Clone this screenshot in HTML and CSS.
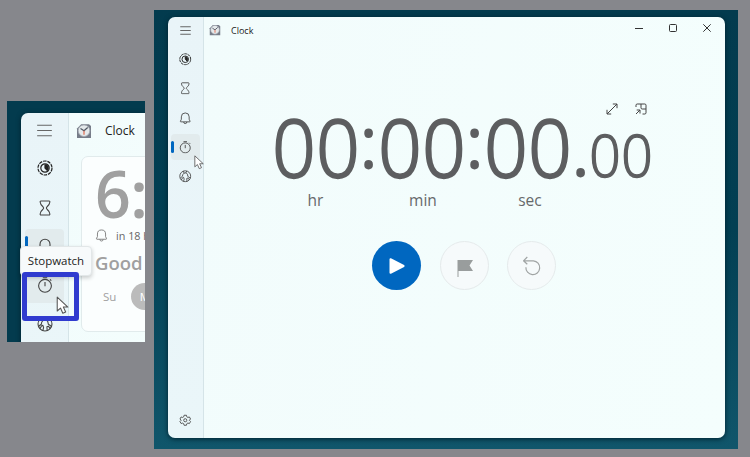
FILE: index.html
```html
<!DOCTYPE html>
<html lang="en">
<head>
<meta charset="utf-8">
<title>Clock</title>
<link rel="stylesheet" href="styles.css">
</head>
<body>
<svg class="defs" aria-hidden="true">
  <symbol id="menu" viewBox="0 0 16 16"><path d="M2.400 4h11.200M2.400 8h11.200M2.400 12h11.200"/></symbol>
  <symbol id="focus" viewBox="0 0 16 16"><circle cx="8" cy="8" r="7" stroke-dasharray="3.500 .9"/><circle cx="8" cy="8" r="4.200"/><path class="solid" d="M8 4.800a3.200 3.200 0 0 1 2.200 5.500L8 8z"/></symbol>
  <symbol id="timer" viewBox="0 0 16 16"><path d="M4 1h8c.8 0 .9.5.8 1.200-.2 2.400-1.400 3.400-2.800 4.600-.8.700-.8 1.700 0 2.400 1.400 1.200 2.600 2.200 2.800 4.600.1.700 0 1.200-.8 1.200H4c-.8 0-.9-.5-.8-1.200.2-2.400 1.400-3.400 2.800-4.600.8-.7.8-1.700 0-2.400C4.600 5.600 3.400 4.600 3.200 2.200 3.100 1.500 3.200 1 4 1z"/></symbol>
  <symbol id="bell" viewBox="0 0 16 16"><path d="M8 1.200A5 5 0 0 0 3 6.200V9.300L1.800 11.800Q1.700 12.600 2.400 12.600H13.600Q14.300 12.600 14.200 11.800L13 9.300V6.200A5 5 0 0 0 8 1.200zM6 12.800a2 2 0 0 0 4 0"/></symbol>
  <symbol id="stopwatch" viewBox="0 0 16 16"><circle cx="8" cy="8.800" r="6.400"/><path d="M8 5v4.200M5.800.8h4.400M13 2.300l1.300 1.300"/></symbol>
  <symbol id="world" viewBox="0 0 16 16"><circle cx="8" cy="8" r="7"/><path d="M5.500 1.500l1 2.500-1.700 2-.5 2.200L1.700 10.300M3 12.800l1.600-3 1.300-.4.700 2.300-.8 2.800M9.800 1.300L9 3.500l1.700 1.800.7 3 2.900 2M13.200 12.600l-1.800-2.400-1.500.6.3 3.800M6.500 4L9 3.600"/></symbol>
  <symbol id="gear" viewBox="0 0 16 16"><path d="M6.500 1.600h3l.5 2 1.300.8 2-.6 1.500 2.600-1.500 1.500v.2l1.500 1.500-1.500 2.600-2-.6-1.300.8-.5 2h-3l-.5-2-1.300-.8-2 .6-1.500-2.600 1.500-1.500v-.2L1.200 6.400l1.500-2.600 2 .6L6 3.600z"/><circle cx="8" cy="8" r="2"/></symbol>
  <symbol id="app" viewBox="0 0 16 16"><path d="M1 5.500L5.200 1.200H13L15 3v12H1z" fill="#777d89" stroke="none"/><circle cx="8" cy="7.700" r="5.800" fill="#e4e9eb" stroke="#a2a8b1" stroke-width=".8"/><path d="M4.500 5.500L8 7.800l3.700-3.300" stroke="#505763" stroke-width="1.200"/><path d="M8 7.700v4" stroke="#e16c50" stroke-width="1.200"/></symbol>
  <symbol id="pointer" viewBox="0 0 12 18"><path d="M1 1v13.200l3.100-2.800 2.200 5 2.700-1.200-2.200-4.700h4.300z" fill="#fff" stroke="#555" stroke-width="1"/></symbol>
</svg>

<section class="desk desk-small">
  <div class="window">
    <nav class="nav">
      <div class="item"><svg><use href="#menu"/></svg></div>
      <div class="item dark"><svg><use href="#focus"/></svg></div>
      <div class="item"><svg><use href="#timer"/></svg></div>
      <div class="item active"><svg><use href="#bell"/></svg></div>
      <div class="item hover"><svg><use href="#stopwatch"/></svg></div>
      <div class="item"><svg><use href="#world"/></svg></div>
    </nav>
    <main class="page">
      <header class="title"><svg><use href="#app"/></svg><span>Clock</span></header>
      <article class="alarm">
        <div class="alarm-time"><span>6</span><span>:</span></div>
        <div class="alarm-in"><svg><use href="#bell"/></svg><span>in 18 h</span></div>
        <div class="alarm-name">Good</div>
        <div class="days"><span>Su</span><span class="day-on">M</span></div>
      </article>
    </main>
  </div>
  <div class="tooltip">Stopwatch</div>
  <div class="highlight"></div>
  <svg class="cursor"><use href="#pointer"/></svg>
</section>

<section class="desk desk-large">
  <div class="window">
    <nav class="nav">
      <div class="item"><svg><use href="#menu"/></svg></div>
      <div class="item dark"><svg><use href="#focus"/></svg></div>
      <div class="item"><svg><use href="#timer"/></svg></div>
      <div class="item"><svg><use href="#bell"/></svg></div>
      <div class="item active"><svg><use href="#stopwatch"/></svg></div>
      <div class="item"><svg><use href="#world"/></svg></div>
      <div class="item settings"><svg><use href="#gear"/></svg></div>
    </nav>
    <main class="page">
      <header class="title"><svg><use href="#app"/></svg><span>Clock</span>
        <div class="controls">
          <svg viewBox="0 0 10 10"><path d="M1 5.500h8"/></svg>
          <svg viewBox="0 0 10 10"><rect x="1.500" y="1.500" width="7" height="7" rx="1"/></svg>
          <svg viewBox="0 0 10 10"><path d="M1.300 1.300l7.400 7.400M8.700 1.300L1.300 8.700"/></svg>
        </div>
      </header>
      <div class="tools">
        <svg viewBox="0 0 12 12"><path d="M1 11L11 1M6.800 1H11v4.200M1 6.800V11h4.200"/></svg>
        <svg viewBox="0 0 12 12"><path d="M1 4V2.200Q1 1 2.200 1H9.800Q11 1 11 2.200V9.800Q11 11 9.800 11H7.500M6 1v3.800Q6 6 7.200 6H11M1 11l4-4M1.700 7H5v3.500"/></svg>
      </div>
      <div class="clock">
        <div class="unit"><div class="digits"><span>0</span><span>0</span></div><div class="label">hr</div></div>
        <div class="sep">:</div>
        <div class="unit"><div class="digits"><span>0</span><span>0</span></div><div class="label label-min">min</div></div>
        <div class="sep">:</div>
        <div class="unit"><div class="digits"><span>0</span><span>0</span></div><div class="label label-sec">sec</div></div>
        <div class="sep point">.</div>
        <div class="digits fraction"><span>0</span><span>0</span></div>
      </div>
      <div class="actions">
        <div class="round play"><svg viewBox="0 0 18 18"><path d="M2.500 2.200v13.600L15.600 9z"/></svg></div>
        <div class="round"><svg class="flag" viewBox="0 0 18 18"><path d="M1.500 1H17l-3.500 5.500L17 12H2.500v6h-1z"/></svg></div>
        <div class="round"><svg class="reset" viewBox="0 0 18 18"><path d="M4.300 0L.5 3.800l3.800 3.500M.7 3.800h9.700a6.900 6.900 0 1 1-7.500 6.400"/></svg></div>
      </div>
    </main>
  </div>
  <svg class="cursor"><use href="#pointer"/></svg>
</section>
</body>
</html>
```

FILE: styles.css
```css
* { box-sizing: border-box; }
body {
  margin: 0;
  height: 457px;
  padding: 10px 7px 0;
  display: flex;
  gap: 9px;
  align-items: flex-start;
  overflow: hidden;
  background: #86878c;
  font-family: "Open Sans", "Noto Sans", sans-serif;
  color: #222;
}
svg { display: block; fill: none; stroke: #444; stroke-width: 1.100; stroke-linejoin: round; overflow: visible; flex: none; }
.defs { position: absolute; width: 0; height: 0; }
.solid { fill: #222; }
.desk { position: relative; flex: none; overflow: hidden; }
.window { display: flex; overflow: hidden; box-shadow: 0 1px 5px #00202d; }
.nav { display: flex; flex-direction: column; flex: none; background: linear-gradient(#e9f4f8, #eaf6f9); border-right: 1px solid #d5e4e8; }
.item { display: flex; align-items: center; justify-content: center; position: relative; }
.item:first-child svg { stroke: #666; }
.dark svg { stroke: #222; stroke-width: 1.200; }
.page { flex: 1; min-width: 0; background: linear-gradient(100deg, #f2fcfc, #f4fefd); }
.title { display: flex; align-items: center; }
.active, .hover { background: #e2ebed; border-radius: 4px; }
.active::before { content: ""; position: absolute; left: 0; background: #0067c0; border-radius: 2px; }

/* Cropped alarm page */
.desk-small { width: 138px; height: 241px; margin-top: 91px; padding: 12px 0 0 14px; background: #033b4e; }
.desk-small .window { width: 190px; height: 260px; border-radius: 7px 0 0; }
.desk-small .nav { width: 48px; padding: 0 4px; }
.desk-small .item { height: 35px; margin-bottom: 3.650px; }
.desk-small .dark { top: -1px; }
.desk-small .item svg { width: 16px; height: 16px; }
.desk-small .item:first-child svg { width: 21px; height: 21px; stroke-width: .900; }
.desk-small .active::before { width: 3px; height: 20px; }
.desk-small .title { height: 35px; padding-left: 7px; gap: 13px; font-size: 12px; }
.desk-small .title svg { width: 16px; height: 16px; }
.alarm { width: 140px; height: 176px; margin: 8px 0 0 12px; padding-left: 13px; background: #fbfefe; border: 1px solid #e1ebec; border-radius: 7px; white-space: nowrap; color: #a0a0a0; }
.alarm-time { height: 69px; display: flex; font: 600 66px/70px "Open Sans", sans-serif; }
.alarm-time span:first-child { width: 35px; transform: scaleX(.95); transform-origin: left; }
.alarm-in { display: flex; align-items: center; gap: 8px; height: 19px; font-size: 10.800px; color: #666; }
.alarm-in svg { width: 13px; height: 13px; stroke: #777; }
.alarm-name { height: 36px; font: 600 18.500px/36px "Open Sans", sans-serif; }
.days { display: flex; align-items: center; gap: 15px; height: 30px; padding-left: 8px; font-size: 11.500px; }
.day-on { width: 27px; height: 27px; line-height: 27px; border-radius: 50%; background: #bbb; color: #fff; text-align: center; }
.tooltip { position: absolute; left: 13px; top: 145px; width: 72px; height: 30px; line-height: 28px; text-align: center; font-size: 11.500px; background: #f7fafb; border: 1px solid #e2e7e8; border-radius: 4px; box-shadow: 0 2px 4px #0003; }
.highlight { position: absolute; left: 15px; top: 171px; width: 57px; height: 49px; border: 5px solid #303bcf; border-radius: 3px; }
.cursor { position: absolute; }
.desk-small .cursor { left: 49px; top: 195px; width: 13px; height: 19px; }

/* Stopwatch page */
.desk-large { width: 584px; height: 439px; padding: 7px 0 0 14px; background: linear-gradient(#033b4e, #023f53 50%, #10566b); }
.desk-large .window { width: 556.500px; height: 421px; border-radius: 7px; }
.desk-large .nav { width: 36px; padding: 0 3px; }
.desk-large .item { height: 26px; margin-bottom: 3.300px; }
.desk-large .item svg { width: 12.500px; height: 12.500px; }
.desk-large .item:first-child svg { width: 15px; height: 15px; }
.desk-large .active::before { width: 2.500px; height: 12px; }
.desk-large .nav .settings { margin: auto 0 5px; }
.desk-large .title { height: 26px; padding-left: 5px; font-size: 9px; }
.desk-large .title > svg { width: 12px; height: 12px; margin-right: 10px; }
.controls { display: flex; gap: 24px; margin: -4px 13px 0 auto; }
.controls svg { width: 10px; height: 10px; stroke: #333; stroke-width: 1; }
.tools { display: flex; justify-content: flex-end; gap: 17px; margin: 60px 78px 0 0; }
.tools svg { width: 12px; height: 12px; stroke-width: 1; }
.clock { display: flex; height: 96px; margin: 0 0 0 67.500px; color: #5d5e60; }
.digits { display: flex; height: 75px; font: 300 80px/62px "Open Sans", sans-serif; -webkit-text-stroke: 2.300px #5d5e60; }
.digits span { width: 44px; display: flex; justify-content: center; transform: scaleX(.95); }
.unit { width: 88px; flex: none; }
.label { font-size: 15.500px; line-height: 20px; text-align: center; color: #66696b; }
.label-min { padding-left: 3px; }
.label-sec { padding-left: 5px; }
.sep { width: 18px; flex: none; display: flex; justify-content: center; font: 400 75px/51px "Open Sans", sans-serif; }
.point { line-height: 66px; }
.fraction { font-size: 58px; line-height: 79px; margin-left: -1px; -webkit-text-stroke-width: 1.500px; }
.fraction span { width: 32px; }
.actions { display: flex; gap: 18.500px; margin: 30px 0 0 168px; }
.round { width: 49px; height: 49px; border-radius: 50%; border: 1.500px solid #e5eaeb; background: #f6fafb; display: flex; align-items: center; justify-content: center; }
.round svg { width: 18px; height: 18px; }
.play { background: #0067c0; border: 0; }
.play svg { fill: #fff; stroke: #fff; stroke-width: 2; }
.round .flag { fill: #999d9d; stroke: none; margin: 4px 0 0 2px; }
.round .reset { stroke: #a0a4a4; stroke-width: 1.200; }
.desk-large .cursor { left: 40px; top: 145px; width: 10px; height: 15px; }
```
